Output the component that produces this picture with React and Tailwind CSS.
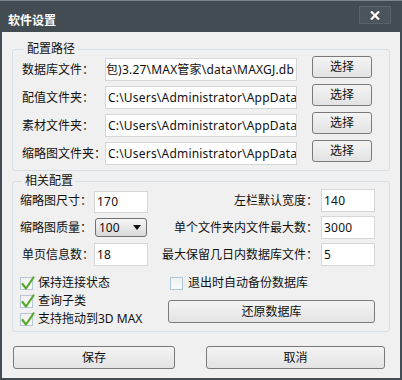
import React from 'react';

const font = { fontFamily: '"Noto Sans", "Noto Sans CJK SC", sans-serif' };

function Btn({ children, className = '' }) {
  return (
    <div
      className={`flex items-center justify-center rounded-[3px] border border-[#7a7a7a] bg-gradient-to-b from-[#f4f4f4] to-[#e3e3e3] text-[12px] text-[#111] ${className}`}
    >
      {children}
    </div>
  );
}

function TextBox({ value, className = '', right = false }) {
  return (
    <div
      className={`flex items-center overflow-hidden whitespace-nowrap border border-[#d6d6d6] bg-white px-[2px] text-[12px] leading-none tracking-[0.2px] text-[#111] ${right ? 'justify-end' : ''} ${className}`}
    >
      <span className="shrink-0">{value}</span>
    </div>
  );
}

function Check({ checked, label }) {
  return (
    <div className="flex h-[18px] items-center gap-[5px]">
      <div className={`relative h-[13px] w-[13px] shrink-0 border bg-gradient-to-b from-[#f0f0f0] to-[#fafafa] ${checked ? 'border-[#b4c8d6]' : 'border-[#a9c9dd]'}`}>
        {checked && (
          <svg className="absolute -left-[1px] -top-[3px]" width="16" height="16" viewBox="0 0 16 16">
            <path d="M2.5 9 L6 13.5 L13.5 2.5" fill="none" stroke="#58a82e" strokeWidth="2.2" strokeLinecap="round" strokeLinejoin="round" />
          </svg>
        )}
      </div>
      <span className="whitespace-nowrap text-[12px] text-[#111]">{label}</span>
    </div>
  );
}

export default function App() {
  const paths = [
    { label: '数据库文件：', value: 'D:\\软件\\MAX管家(正式包)3.27\\MAX管家\\data\\MAXGJ.db', right: true },
    { label: '配值文件夹：', value: 'C:\\Users\\Administrator\\AppData' },
    { label: '素材文件夹：', value: 'C:\\Users\\Administrator\\AppData' },
    { label: '缩略图文件夹：', value: 'C:\\Users\\Administrator\\AppData' },
  ];

  return (
    <div className="flex h-[380px] w-[402px] flex-col bg-[#434c52]" style={font}>
      {/* title bar */}
      <div className="flex h-[32px] shrink-0 items-start justify-between border-t border-[#7c8489] pl-[8px] pr-[11px]">
        <span className="pt-[12px] text-[12px] font-bold leading-[16px] text-white">软件设置</span>
        <div className="mt-[5px] flex h-[18px] w-[32px] items-center justify-center border border-[#5a6369] bg-[#4b545a]">
          <svg width="10" height="9" viewBox="0 0 10 9">
            <path d="M1 0.5 L9 8.5 M9 0.5 L1 8.5" stroke="#fff" strokeWidth="2.2" />
          </svg>
        </div>
      </div>

      {/* body */}
      <div className="mx-[2px] mb-[2px] flex flex-1 flex-col bg-[#f0f0f0] text-[#111]">
        <fieldset className="mx-[10px] mt-[9px] rounded-[3px] border border-[#d5dfe5] pb-[5px] pl-[9px] pt-[1px]">
          <legend className="ml-[2px] px-[3px] text-[12px] leading-[16px]">配置路径</legend>
          <div className="flex flex-col gap-[5px]">
            {paths.map((p) => (
              <div key={p.label} className="flex items-start">
                <span className="w-[83px] whitespace-nowrap text-[12px] leading-[23px]">{p.label}</span>
                <TextBox value={p.value} right={p.right} className="h-[23px] w-[192px]" />
                <Btn className="-mt-[2px] ml-[15px] h-[22px] w-[60px]">选择</Btn>
              </div>
            ))}
          </div>
        </fieldset>

        <fieldset className="mx-[10px] mt-[2px] rounded-[3px] border border-[#d5dfe5] pb-[3px] pl-[7px] pr-[14px]">
          <legend className="ml-[2px] px-[3px] text-[12px] leading-[16px]">相关配置</legend>
          <div className="flex flex-col gap-[4px]">
            <div className="flex h-[23px] items-center">
              <span className="w-[74px] text-[12px]">缩略图尺寸：</span>
              <TextBox value="170" className="mt-[2px] h-[22px] w-[54px]" />
              <span className="flex-1 pr-[3px] text-right text-[12px]">左栏默认宽度：</span>
              <TextBox value="140" className="h-[23px] w-[54px]" />
            </div>
            <div className="flex h-[23px] items-center">
              <span className="w-[74px] text-[12px]">缩略图质量：</span>
              <div className="ml-[1px] flex h-[19px] w-[52px] items-center justify-between rounded-[3px] border border-[#707070] bg-gradient-to-b from-[#f6f6f6] to-[#d8d8d8] pl-[3px] pr-[5px] text-[12px]">
                <span>100</span>
                <svg width="8" height="5" viewBox="0 0 8 5">
                  <path d="M0 0 H8 L4 5 Z" fill="#111" />
                </svg>
              </div>
              <span className="flex-1 pr-[3px] text-right text-[12px]">单个文件夹内文件最大数：</span>
              <TextBox value="3000" className="h-[23px] w-[54px]" />
            </div>
            <div className="flex h-[23px] items-center">
              <span className="w-[74px] pl-[2px] text-[12px]">单页信息数：</span>
              <TextBox value="18" className="h-[23px] w-[54px]" />
              <span className="flex-1 pr-[3px] text-right text-[12px]">最大保留几日内数据库文件：</span>
              <TextBox value="5" className="h-[23px] w-[54px]" />
            </div>
          </div>

          <div className="mt-[8px] flex">
            <div className="flex w-[148px] flex-col">
              <Check checked label="保持连接状态" />
              <Check checked label="查询子类" />
              <Check checked label="支持拖动到3D MAX" />
            </div>
            <div className="flex flex-1 flex-col">
              <div className="pl-[2px]">
                <Check label="退出时自动备份数据库" />
              </div>
              <Btn className="mt-[8px] h-[23px] w-full">还原数据库</Btn>
            </div>
          </div>
        </fieldset>

        <div className="mt-[14px] flex pl-[11px]">
          <Btn className="h-[23px] w-[162px]">保存</Btn>
          <Btn className="ml-[31px] h-[23px] w-[179px]">取消</Btn>
        </div>
      </div>
    </div>
  );
}
